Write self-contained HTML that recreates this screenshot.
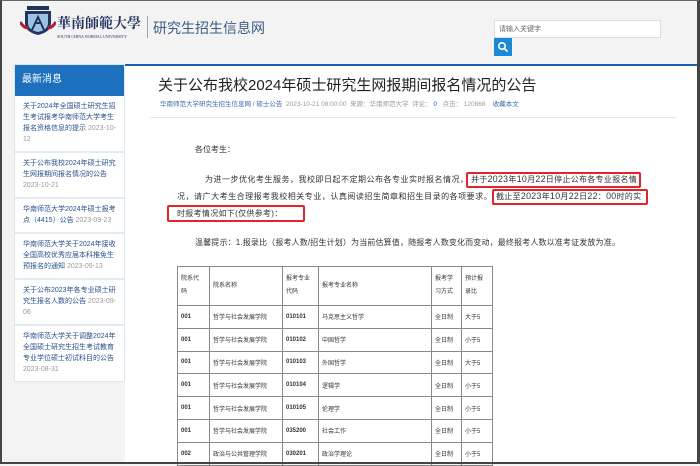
<!DOCTYPE html>
<html><head><meta charset="utf-8"><style>
*{margin:0;padding:0;box-sizing:border-box}
body{width:700px;height:464px;overflow:hidden;background:#f3f3f3;font-family:"Liberation Sans","Noto Sans CJK SC",sans-serif;position:relative}
.frame{position:absolute;left:0;top:0;width:700px;height:464px;border:2px solid #444;border-top:1px solid #666;border-right:3px solid #444;pointer-events:none;z-index:10}
.a{position:absolute;white-space:nowrap}
.side{position:absolute;left:14px;top:64px;width:111px;background:#fff;border:1px solid #dde6ef}
.sh{background:#1c70bd;color:#fff;font-size:10px;height:31px;line-height:29px;padding-left:7px}
.it{border-bottom:2px solid #e2eaf2;padding:5px 8px 6px 8px;font-size:7px;line-height:11px;color:#27508a;white-space:normal}
.it span{color:#999}
.main{position:absolute;left:125px;top:64px;width:572px;height:400px;background:#fff;border-top:2px solid #1c5fae}
p.t{font-size:8px;color:#333}
p.t i{font-style:normal;font-size:8.8px}
table{position:absolute;left:177px;top:266px;border-collapse:collapse;font-size:6px;color:#333}
td{border:1px solid #888;height:22.8px;padding-left:3px;vertical-align:middle}
tr.h td{height:39px;line-height:13px}
.box{position:absolute;border:2px solid #e3242b;border-radius:2px}
</style></head><body>
<svg class="a" style="left:20px;top:6px" width="36" height="30" viewBox="0 0 36 30">
<rect x="7" y="0" width="22" height="4" fill="#24345f"/>
<path d="M5 5h26v12q0 9-13 12q-13-3-13-12z" fill="#24345f"/>
<path d="M8 8h20v9q0 7-10 9q-10-2-10-9z" fill="#9cc3e4"/>
<path d="M12 24l6-13l6 13M15 17h6" stroke="#24345f" stroke-width="2" fill="none"/>
<path d="M0 16q4 6 8 6M36 16q-4 6-8 6" stroke="#b0213a" stroke-width="3" fill="none"/>
</svg>
<div class="a" style="left:57px;top:13px;font-size:14px;font-family:'Noto Serif CJK SC',serif;font-weight:bold;color:#24345f">華南師範大學</div>
<div class="a" style="left:57px;top:34px;font-size:4px;color:#24345f;font-family:'Liberation Serif',serif">SOUTH CHINA NORMAL UNIVERSITY</div>
<div class="a" style="left:147px;top:16px;width:1px;height:22px;background:#9aa"></div>
<div class="a" style="left:153px;top:18px;font-size:14px;color:#3d5c85">研究生招生信息网</div>
<div class="a" style="left:494px;top:20px;width:167px;height:18px;background:#fff;border:1px solid #ddd;font-size:7px;color:#666;padding:4px 4px;line-height:9px">请输入关键字</div>
<div class="a" style="left:494px;top:38px;width:18px;height:18px;background:#1a8ad4"><svg width="18" height="18"><circle cx="8" cy="8" r="3.2" stroke="#fff" stroke-width="1.6" fill="none"/><path d="M10.5 10.5l3 3" stroke="#fff" stroke-width="1.8"/></svg></div>
<div class="side">
<div class="sh">最新消息</div>
<div class="it">关于2024年全国硕士研究生招生考试报考华南师范大学考生报名资格信息的提示 <span>2023-10-12</span></div>
<div class="it">关于公布我校2024年硕士研究生网报期间报名情况的公告 <span>2023-10-21</span></div>
<div class="it">华南师范大学2024年硕士报考点（4415）公告 <span>2023-09-23</span></div>
<div class="it">华南师范大学关于2024年接收全国高校优秀应届本科推免生预报名的通知 <span>2023-09-13</span></div>
<div class="it">关于公布2023年各专业硕士研究生报名人数的公告 <span>2023-09-06</span></div>
<div class="it" style="border-bottom:none">华南师范大学关于调整2024年全国硕士研究生招生考试教育专业学位硕士初试科目的公告 <span>2023-08-31</span></div>
</div>
<div class="main"></div>
<div class="a" style="left:158px;top:74px;font-size:15px;color:#222">关于公布我校2024年硕士研究生网报期间报名情况的公告</div>
<div class="a" style="left:160px;top:98px;font-size:6.5px;color:#999"><span style="color:#3a6aa8">华南师范大学研究生招生信息网 / 硕士公告</span>&nbsp; 2023-10-21 08:00:00 &nbsp;来源：华南师范大学 &nbsp;评论：<span style="color:#1a5fb4"> 0</span> &nbsp; 点击： 120868 &nbsp;&nbsp; <span style="color:#3a6aa8">收藏本文</span></div>
<div class="a" style="left:150px;top:117px;width:526px;height:1px;background:#e5e5e5"></div>
<p class="t a" style="left:195px;top:144px">各位考生：</p>
<p class="t a" style="left:205px;top:174px;letter-spacing:0.5px">为进一步优化考生服务，我校即日起不定期公布各专业实时报名情况，</p>
<p class="t a" style="left:471px;top:174px;letter-spacing:0.3px">并于<i>2023</i>年<i>10</i>月<i>22</i>日停止公布各专业报名情</p>
<p class="t a" style="left:177px;top:191px;letter-spacing:0.52px">况，请广大考生合理报考我校相关专业，认真阅读招生简章和招生目录的各项要求。</p>
<p class="t a" style="left:496px;top:191px;letter-spacing:0.3px">截止至<i>2023</i>年<i>10</i>月<i>22</i>日<i>22</i>：<i>00</i>时的实</p>
<p class="t a" style="left:177px;top:208px;letter-spacing:0.3px">时报考情况如下(仅供参考)：</p>
<p class="t a" style="left:195px;top:237px;letter-spacing:0.15px">温馨提示：1.报录比（报考人数/招生计划）为当前估算值，随报考人数变化而变动，最终报考人数以准考证发放为准。</p>
<div class="box" style="left:466px;top:172px;width:175px;height:16px"></div>
<div class="box" style="left:492px;top:189px;width:156px;height:16px"></div>
<div class="box" style="left:167px;top:205px;width:138px;height:17px"></div>
<table>
<tr class="h"><td style="width:32px">院系代<br>码</td><td style="width:73px">院系名称</td><td style="width:36px">报考专业<br>代码</td><td style="width:113px">报考专业名称</td><td style="width:30px">报考学<br>习方式</td><td style="width:31px">预计报<br>录比</td></tr>
<tr><td><b>001</b></td><td>哲学与社会发展学院</td><td><b>010101</b></td><td>马克思主义哲学</td><td>全日制</td><td>大于5</td></tr>
<tr><td><b>001</b></td><td>哲学与社会发展学院</td><td><b>010102</b></td><td>中国哲学</td><td>全日制</td><td>小于5</td></tr>
<tr><td><b>001</b></td><td>哲学与社会发展学院</td><td><b>010103</b></td><td>外国哲学</td><td>全日制</td><td>大于5</td></tr>
<tr><td><b>001</b></td><td>哲学与社会发展学院</td><td><b>010104</b></td><td>逻辑学</td><td>全日制</td><td>小于5</td></tr>
<tr><td><b>001</b></td><td>哲学与社会发展学院</td><td><b>010105</b></td><td>伦理学</td><td>全日制</td><td>小于5</td></tr>
<tr><td><b>001</b></td><td>哲学与社会发展学院</td><td><b>035200</b></td><td>社会工作</td><td>全日制</td><td>小于5</td></tr>
<tr><td><b>002</b></td><td>政治与公共管理学院</td><td><b>030201</b></td><td>政治学理论</td><td>全日制</td><td>小于5</td></tr>
</table>
<div class="frame"></div>
</body></html>
